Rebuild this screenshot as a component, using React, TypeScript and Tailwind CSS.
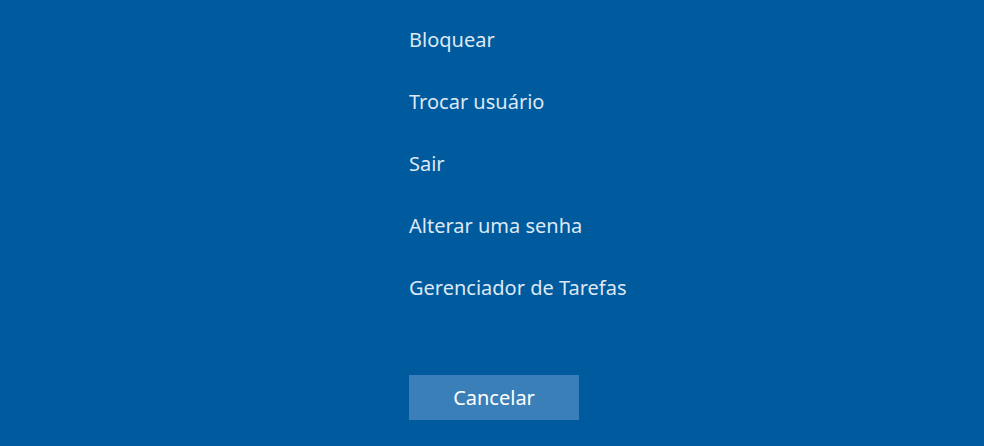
const items = ["Bloquear", "Trocar usuário", "Sair", "Alterar uma senha", "Gerenciador de Tarefas"];

export default function App() {
  return (
    <div
      className="h-[446px] w-full overflow-hidden bg-[#005a9e] pl-[409px] text-[#dde8f3]"
      style={{ fontFamily: '"Noto Sans", "Open Sans", sans-serif' }}
    >
      <ul className="flex flex-col pt-[25px]">
        {items.map((label) => (
          <li key={label} className="flex h-[62px] items-start">
            <button type="button" className="text-[20px] leading-[30px]">
              {label}
            </button>
          </li>
        ))}
      </ul>
      <button
        type="button"
        className="mt-[40px] h-[45px] w-[170px] bg-[#3b7fb8] text-[20px] text-white"
      >
        Cancelar
      </button>
    </div>
  );
}
